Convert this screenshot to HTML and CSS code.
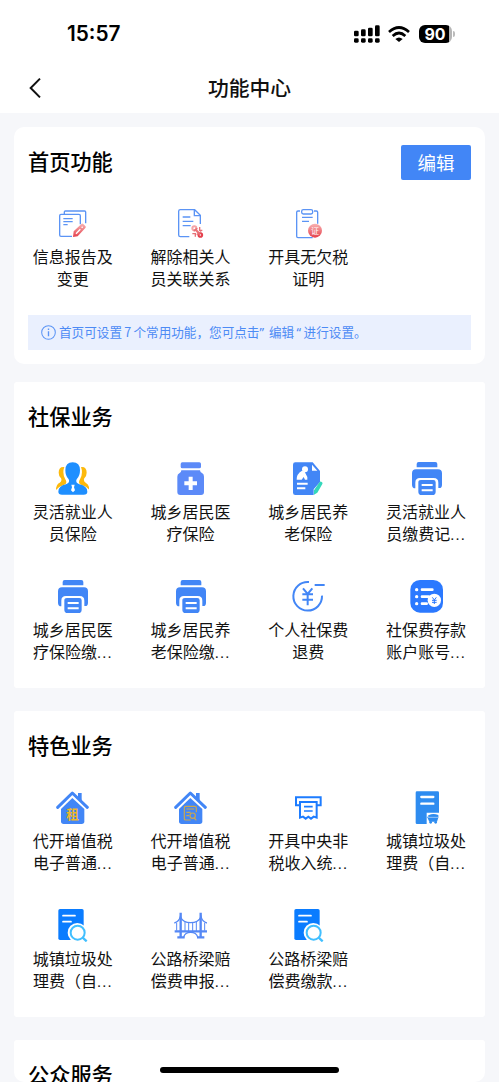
FILE: index.html
```html
<!DOCTYPE html>
<html lang="zh-CN">
<head>
<meta charset="utf-8">
<title>功能中心</title>
<link rel="stylesheet" href="styles.css">
</head>
<body>
<svg class="defs" aria-hidden="true">
  <defs>
    <linearGradient id="red" x1="0" y1="0" x2="0" y2="1"><stop offset="0" stop-color="#f9b4b4"/><stop offset="1" stop-color="#e5404c"/></linearGradient>
  </defs>
  <symbol id="printer" viewBox="0 0 99 99">
    <path fill="#4286f6" d="M20 16V6q0-6 6-6h50q6 0 6 6v10z"/>
    <path fill="#4286f6" d="M6 76V34q0-12 12-12h66q12 0 12 12v34q0 10-8 10h-3V62q0-14-14-14H30q-14 0-14 14v17q-10 0-10-11z"/>
    <path fill="#4286f6" fill-rule="evenodd" d="M33 54h37q7 0 7 7v28q0 10-10 10H35q-10 0-10-10V61q0-7 8-7zM35 66v6h33v-6zM35 82v6h33v-6z"/>
  </symbol>
  <symbol id="doc-search" viewBox="0 0 99 99">
    <path fill="#0a7cff" d="M12 0h66q5 0 5 5v88H12q-5 0-5-5V5q0-5 5-5z"/>
    <path stroke="#fff" stroke-width="5" stroke-linecap="round" d="M21 20h36M21 38h24"/>
    <circle cx="64" cy="71" r="29" fill="#fff"/>
    <circle cx="65" cy="71" r="21" fill="#fff" stroke="#41bfff" stroke-width="6"/>
    <path stroke="#41bfff" stroke-width="7" d="M80 86l12 11"/>
  </symbol>
  <symbol id="house" viewBox="0 0 99 99">
    <path fill="none" stroke="#4286f6" stroke-width="9" stroke-linecap="round" stroke-linejoin="round" d="M5 49L49 6l45 43"/>
    <path fill="#4286f6" d="M66 6h11v25L66 20z"/>
    <path fill="#4286f6" d="M15 54l34-33 36 33v37q0 8-8 8H23q-8 0-8-8z"/>
  </symbol>
</svg>

<header class="top">
  <div class="status">
    <span class="time">15:57</span>
    <div class="status-icons">
      <svg class="signal" viewBox="0 0 78 54">
        <rect x="0" y="17" width="14" height="17" rx="4"/><rect x="21" y="13" width="14" height="21" rx="4"/><rect x="42" y="8" width="14" height="26" rx="4"/><rect x="63" y="1" width="14" height="33" rx="4"/>
        <rect x="0" y="40" width="14" height="13" rx="4"/><rect x="21" y="40" width="14" height="13" rx="4"/><rect x="42" y="40" width="14" height="13" rx="4"/><rect x="63" y="40" width="14" height="13" rx="4"/>
      </svg>
      <svg class="wifi" viewBox="0 0 66 48"><path fill="none" stroke="#000" stroke-width="8" d="M3 18Q33-9 63 18M14 30q19-18 38 0"/><path d="M22 39q11-9 22 0L33 48z"/></svg>
      <span class="battery">90</span>
    </div>
  </div>
  <div class="nav">
    <svg class="back" viewBox="0 0 36 60"><path fill="none" stroke="#111" stroke-width="6" d="M33 2L5 30l28 28"/></svg>
    <h1>功能中心</h1>
  </div>
</header>

<main>
  <section class="card home">
    <div class="head"><h2>首页功能</h2><button class="edit">编辑</button></div>
    <div class="grid">
      <a class="item">
        <svg class="icon" viewBox="0 0 99 99">
          <g fill="none" stroke="#5b94f5" stroke-width="4"><path d="M25 20v-5q0-3 3-3h58q3 0 3 3v34M48 88H15q-4 0-4-4V26q0-4 4-4h54q4 0 4 4v26"/><path d="M22 35h28M22 44h28M22 53h13"/></g>
          <path fill="url(#red)" d="M51 90l2-17 23-22q3-3 6 0l6 6q3 3 0 6L65 88z"/><path stroke="#fff" stroke-width="4" d="M60 80l13-13M77 62l3-3"/>
        </svg>
        <span class="label">信息报告及<br>变更</span>
      </a>
      <a class="item">
        <svg class="icon" viewBox="0 0 99 99">
          <g fill="none" stroke="#5b94f5" stroke-width="4"><path d="M46 89H19q-5 0-5-5V13q0-5 5-5h43l17 17v26M61 9v17h18M26 30h23M26 43h32M26 56h24"/></g>
          <g fill="none" stroke-width="6"><circle cx="61" cy="64" r="6" stroke="#f5a4a6"/><circle cx="79" cy="84" r="5.500" stroke="#e5404c"/></g>
          <path fill="none" stroke="#ec7479" stroke-width="7" d="M63 66l14 15"/><path fill="none" stroke="#e77177" stroke-width="4" d="M77 60v10h8M55 80h9v9M70 64l-11 9M82 74l-14 9"/>
        </svg>
        <span class="label">解除相关人<br>员关联关系</span>
      </a>
      <a class="item">
        <svg class="icon" viewBox="0 0 99 99">
          <g fill="none" stroke="#5b94f5" stroke-width="4"><path d="M24 12h-6q-4 0-4 4v72q0 4 4 4h44M66 12h7q4 0 4 4v34M30 31h32M30 43h21"/><rect x="29" y="8" width="33" height="13" rx="5"/></g>
          <circle cx="69" cy="71" r="21" fill="url(#red)"/><text class="seal" x="69" y="80">证</text>
        </svg>
        <span class="label">开具无欠税<br>证明</span>
      </a>
    </div>
    <p class="tip">
      <svg class="info" viewBox="0 0 44 44"><circle cx="22" cy="22" r="20" fill="none" stroke="#5b94f5" stroke-width="3"/><path stroke="#5b94f5" stroke-width="4" d="M22 10v5M22 18v15"/></svg>
      <span>首页可设置<span class="num">7</span>个常用功能，您可点击<span class="ql">”</span>编辑<span class="qr">“</span>进行设置。</span>
    </p>
  </section>

  <section class="card">
    <div class="head"><h2>社保业务</h2></div>
    <div class="grid">
      <a class="item">
        <svg class="icon" viewBox="0 0 99 99">
          <path fill="#fcb90c" d="M25 15q-17-2-17 17 0 10 7 17 4 8-4 13Q0 67 0 84q8-11 23-15 13-4 5-17-10-18-3-37zM75 15q17-2 17 17 0 10-7 17-4 8 4 13 11 5 11 22-8-11-23-15-13-4-5-17 10-18 3-37z"/>
          <path fill="#1e8fff" d="M50 1q22 0 22 24 0 17-10 27-5 10 8 15 24 5 24 22 0 9-11 9H18q-11 0-11-9 0-17 23-22 13-5 8-15-10-10-10-27Q28 1 50 1z"/>
          <path fill="#fff" d="M46 68h10l-2 8 3 9-6 6-6-6 3-9z"/>
        </svg>
        <span class="label">灵活就业人<br>员保险</span>
      </a>
      <a class="item">
        <svg class="icon" viewBox="0 0 99 99">
          <rect x="20" y="1" width="61" height="18" rx="5" fill="#5c8af8"/><path fill="#5c8af8" d="M22 25h56q0 6 7 9 5 3 5 10v46q0 9-9 9H19q-9 0-9-9V44q0-7 6-10 6-3 6-9z"/><path stroke="#fff" stroke-width="12" d="M31 64h38M50 44v40"/>
        </svg>
        <span class="label">城乡居民医<br>疗保险</span>
      </a>
      <a class="item">
        <svg class="icon" viewBox="0 0 99 99">
          <path fill="#4286f6" d="M10 1h52l22 26v33L65 82v17H10q-7 0-7-7V8q0-7 7-7z"/>
          <path fill="#fff" d="M60 8v18h16zM15 62h32v6H15zM15 76h25v6H15zM30 26l8 3 8 16v8h-7l-4-8-6 8H14q-1-17 16-27z"/>
          <circle cx="39" cy="22" r="9" fill="#fff"/>
          <path fill="#34d8bb" d="M83 60q3-3 7 1 3 2 1 5L76 92l-10 6V85z"/>
        </svg>
        <span class="label">城乡居民养<br>老保险</span>
      </a>
      <a class="item"><svg class="icon"><use href="#printer"/></svg><span class="label">灵活就业人<br>员缴费记<i>...</i></span></a>
      <a class="item"><svg class="icon"><use href="#printer"/></svg><span class="label">城乡居民医<br>疗保险缴<i>...</i></span></a>
      <a class="item"><svg class="icon"><use href="#printer"/></svg><span class="label">城乡居民养<br>老保险缴<i>...</i></span></a>
      <a class="item">
        <svg class="icon" viewBox="0 0 99 99">
          <path fill="none" stroke="#4286f6" stroke-width="6" d="M51 6A43 43 0 1 0 90 47M68 15h30"/><path fill="none" stroke="#4286f6" stroke-width="6" d="M33 25l14 17 14-17M47 42v34M31 43h32M31 59h32"/>
        </svg>
        <span class="label">个人社保费<br>退费</span>
      </a>
      <a class="item">
        <svg class="icon" viewBox="0 0 99 99">
          <rect x="1" y="0" width="98" height="98" rx="29" fill="#2b79ff"/>
          <g fill="#fff"><circle cx="20" cy="29" r="5"/><circle cx="20" cy="50" r="5"/><circle cx="20" cy="71" r="5"/><circle cx="73" cy="61" r="20"/></g>
          <path stroke="#fff" stroke-width="8" stroke-linecap="round" d="M36 29h31M36 50h20M36 71h14"/><path fill="none" stroke="#2b79ff" stroke-width="3" d="M67 52l6 8 6-8M73 60v12M66 61h14M66 67h14"/>
        </svg>
        <span class="label">社保费存款<br>账户账号<i>...</i></span>
      </a>
    </div>
  </section>

  <section class="card">
    <div class="head"><h2>特色业务</h2></div>
    <div class="grid">
      <a class="item"><svg class="icon" viewBox="0 0 99 99"><use href="#house"/><text class="rent" x="50" y="84">租</text></svg><span class="label">代开增值税<br>电子普通<i>...</i></span></a>
      <a class="item"><svg class="icon" viewBox="0 0 99 99"><use href="#house"/><g fill="none" stroke="#cba74e" stroke-width="3.500"><path d="M50 87H35q-4 0-4-4V50q0-4 4-4h27q5 0 5 5v13M37 54h24M37 64h13M37 74h8"/><circle cx="56" cy="74" r="8"/><path d="M61 81l6 7"/></g></svg><span class="label">代开增值税<br>电子普通<i>...</i></span></a>
      <a class="item"><svg class="icon" viewBox="0 0 99 99"><g fill="none" stroke="#1d7cff" stroke-width="6"><path d="M23 43H12V19h74v24H75"/><path d="M24 80V33h50v47l-9-3-8 6-8-6-8 6-8-6z"/><path stroke-width="5" d="M36 47h26M36 60h26"/></g></svg><span class="label">开具中央非<br>税收入统<i>...</i></span></a>
      <a class="item"><svg class="icon" viewBox="0 0 99 99"><path fill="#2e8cf0" d="M21 1h62q4 0 4 4v60H50v34H21q-4 0-4-4V5q0-4 4-4z"/><path stroke="#fff" stroke-width="7" stroke-linecap="round" d="M34 18h36M34 38h36"/><path fill="#2e8cf0" d="M57 72q13-6 28 0v6H55v-6zM51 77h35l-5 15H58z"/><circle cx="62" cy="94" r="4" fill="#2e8cf0"/><circle cx="77" cy="94" r="4" fill="#2e8cf0"/><path stroke="#fff" stroke-width="1.500" d="M54 79h31"/></svg><span class="label">城镇垃圾处<br>理费（自<i>...</i></span></a>
      <a class="item"><svg class="icon"><use href="#doc-search"/></svg><span class="label">城镇垃圾处<br>理费（自<i>...</i></span></a>
      <a class="item"><svg class="icon" viewBox="0 0 99 99"><g fill="none" stroke="#5588f5"><path stroke-width="7" d="M20 11v72M80 11v72M2 67h97M10 85h22M69 85h22"/><path stroke-width="4" d="M1 42q14-4 18-19 8 18 31 18t31-18q4 15 18 19M29 84q4-14 21-14t21 14"/><path stroke-width="3" d="M8 41v24M33 39v27M44 42v24M56 42v24M67 39v27M92 41v24"/></g></svg><span class="label">公路桥梁赔<br>偿费申报<i>...</i></span></a>
      <a class="item"><svg class="icon"><use href="#doc-search"/></svg><span class="label">公路桥梁赔<br>偿费缴款<i>...</i></span></a>
    </div>
  </section>

  <section class="card public">
    <div class="head"><h2>公众服务</h2></div>
  </section>
</main>
<div class="home-bar"></div>
</body>
</html>
```
FILE: styles.css
```css
* { box-sizing: border-box; }
body {
  margin: 0;
  height: 1082px;
  overflow: hidden;
  background: #f6f7fa;
  color: #111;
  font-family: "Noto Sans CJK SC", sans-serif;
}
h1, h2, p { margin: 0; }
.defs { position: absolute; width: 0; height: 0; }

.top { height: 113px; background: #fff; }
.status {
  display: flex;
  justify-content: space-between;
  align-items: center;
  height: 62px;
  padding: 6px 44px 0 67px;
}
.time { font: 600 20.800px/24px Inter, sans-serif; color: #000; }
.status-icons { display: flex; align-items: center; }
.signal { width: 26px; height: 18px; margin-right: 8px; }
.wifi { width: 22px; height: 16px; margin-right: 9px; }
.battery {
  position: relative;
  width: 33px;
  height: 18px;
  margin-right: 3px;
  padding-right: 1px;
  border-radius: 6px;
  background: linear-gradient(90deg, #000 30px, #b5b5b5 30px);
  color: #fff;
  font: 700 16px/18px Inter, sans-serif;
  text-align: center;
}
.battery::after {
  content: "";
  position: absolute;
  left: 34px;
  top: 6px;
  width: 2px;
  height: 6px;
  border-radius: 0 2px 2px 0;
  background: #bbb;
}
.nav {
  display: grid;
  grid-template-columns: 1fr auto 1fr;
  align-items: center;
  height: 51px;
  padding: 0 29px;
}
.back { width: 12px; height: 20px; }
.nav h1 { padding-bottom: 2px; font-size: 20.800px; line-height: 30px; font-weight: 500; }

main { padding: 14px 14px 0; }
.card {
  height: 305.500px;
  margin-bottom: 23.500px;
  padding-top: 17px;
  border-radius: 3px;
  background: #fff;
}
.home { height: 237px; margin-bottom: 18px; border-radius: 10px; }
.public { height: 42px; margin-bottom: 0; overflow: hidden; border-radius: 3px 3px 10px 10px; }
.head {
  display: flex;
  justify-content: space-between;
  align-items: center;
  height: 36px;
  margin-bottom: 27px;
  padding: 0 14px;
}
.head h2 { padding-bottom: 2px; font-size: 21.200px; line-height: 32px; font-weight: 500; color: #000; }
.edit {
  width: 70px;
  height: 35px;
  padding: 0;
  border: 0;
  border-radius: 2px;
  background: #4286f6;
  color: #fff;
  font: 400 18.500px/33px "Noto Sans CJK SC", sans-serif;
}
.grid {
  display: grid;
  grid-template-columns: repeat(4, 1fr);
  grid-auto-rows: 118px;
}
.item { display: flex; flex-direction: column; align-items: center; }
.icon { width: 33px; height: 33px; margin-bottom: 5px; }
.label { font-size: 16px; line-height: 22px; text-align: center; white-space: nowrap; }
.label i { font-family: Roboto, sans-serif; font-style: normal; letter-spacing: 1.100px; }
.seal { font-size: 24px; fill: #fff; text-anchor: middle; }
.rent { font-size: 38px; font-weight: 700; fill: #f0b72a; text-anchor: middle; }

.home .grid { grid-auto-rows: 108px; }
.tip {
  display: flex;
  align-items: center;
  height: 35px;
  margin: 0 14px;
  padding-left: 13px;
  background: #eaf0fe;
  color: #4d8bf5;
  font-size: 12.600px;
  line-height: 20px;
  white-space: nowrap;
}
.info { width: 15px; height: 15px; margin-right: 3px; }
.num { display: inline-block; width: 11.500px; text-align: center; }
.ql, .qr { display: inline-block; width: 9.500px; font-family: "Noto Sans", sans-serif; }
.qr { text-align: center; }

.home-bar {
  position: fixed;
  left: 160px;
  top: 1067px;
  width: 179px;
  height: 6px;
  border-radius: 3px;
  background: #000;
}
```
